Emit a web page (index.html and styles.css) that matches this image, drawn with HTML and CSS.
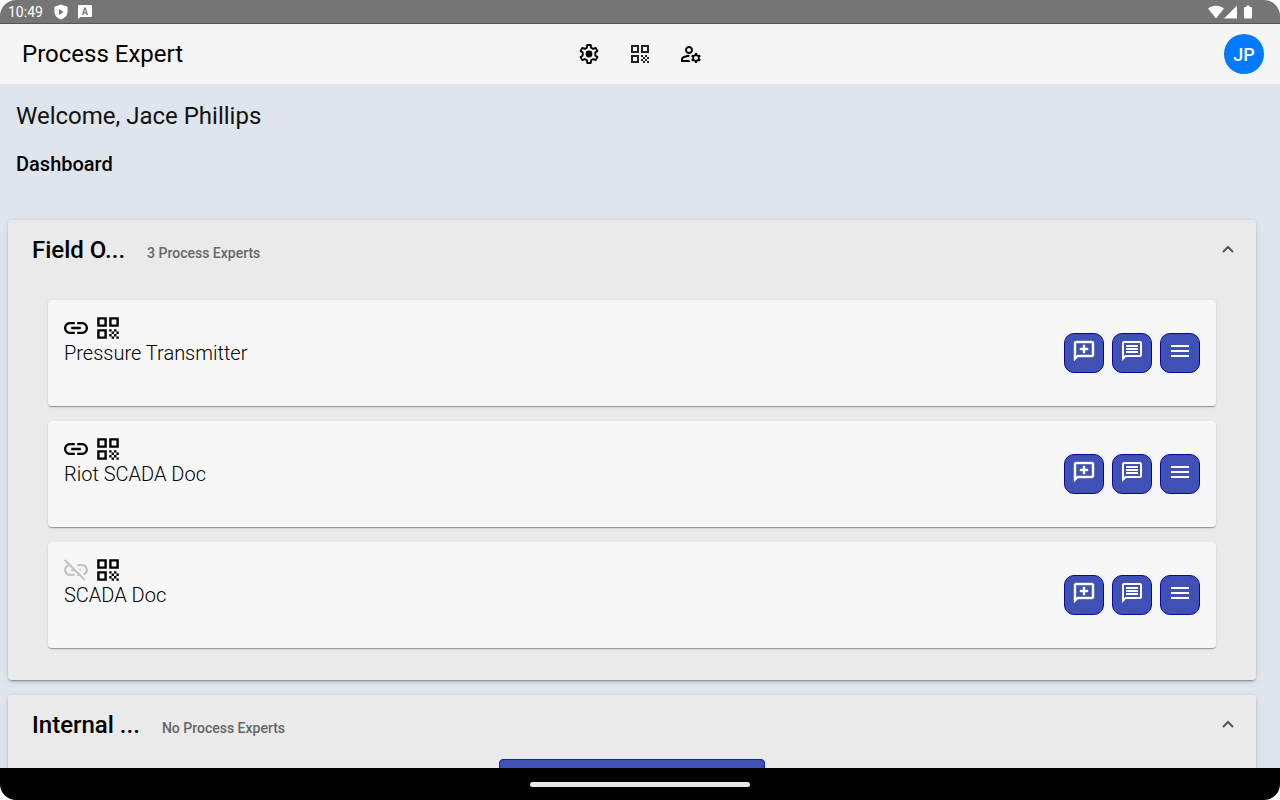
FILE: index.html
```
<!DOCTYPE html>
<html lang="en">

<head>
    <meta charset="UTF-8">
    <meta name="viewport" content="width=device-width, initial-scale=1.0">
    <link rel="stylesheet" href="styles.css">
    <title>Process Expert</title>
</head>

<body>
    <!-- shared icons -->
    <svg class="sprite" aria-hidden="true">
        <symbol id="qr" viewBox="2 2 20 20">
            <path d="M3 11h8V3H3v8zm2-6h4v4H5V5zM3 21h8v-8H3v8zm2-6h4v4H5v-4zM13 3v8h8V3h-8zm6 6h-4V5h4v4zM19 19h2v2h-2zM13 13h2v2h-2zM15 15h2v2h-2zM13 17h2v2h-2zM15 19h2v2h-2zM17 17h2v2h-2zM17 13h2v2h-2zM19 15h2v2h-2z" />
        </symbol>
        <symbol id="link" viewBox="2 2 20 20">
            <path d="M3.9 12c0-1.71 1.39-3.1 3.1-3.1h4V7H7c-2.76 0-5 2.24-5 5s2.24 5 5 5h4v-1.9H7c-1.71 0-3.1-1.39-3.1-3.1zM8 13h8v-2H8v2zm9-6h-4v1.9h4c1.71 0 3.1 1.39 3.1 3.1s-1.39 3.1-3.1 3.1h-4V17h4c2.76 0 5-2.24 5-5s-2.24-5-5-5z" />
        </symbol>
        <symbol id="link-off" viewBox="2 2 20 20">
            <path d="M17 7h-4v1.9h4c1.71 0 3.1 1.39 3.1 3.1 0 1.43-.98 2.63-2.31 2.98l1.46 1.46C20.88 15.61 22 13.95 22 12c0-2.76-2.24-5-5-5zm-1 4h-2.19l2 2H16zM2 4.27l3.11 3.11C3.29 8.12 2 9.91 2 12c0 2.76 2.24 5 5 5h4v-1.9H7c-1.71 0-3.1-1.39-3.1-3.1 0-1.59 1.21-2.9 2.76-3.07L8.73 11H8v2h2.73L13 15.27V17h1.73l4.01 4L20 19.74 3.27 3 2 4.27z" />
        </symbol>
        <symbol id="add-chat" viewBox="0 0 24 24">
            <path d="M20 2H4c-1.1 0-2 .9-2 2v18l4-4h14c1.1 0 2-.9 2-2V4c0-1.1-.9-2-2-2zm0 14H5.17L4 17.17V4h16v12zM11 14h2v-3h3V9h-3V6h-2v3H8v2h3z" stroke="currentColor" stroke-width=".4" />
        </symbol>
        <symbol id="chat" viewBox="0 0 24 24">
            <path d="M20 2H4c-1.1 0-2 .9-2 2v18l4-4h14c1.1 0 2-.9 2-2V4c0-1.1-.9-2-2-2zm0 14H5.17L4 17.17V4h16v12zM6 12h12v2H6zM6 9h12v2H6zM6 6h12v2H6z" />
        </symbol>
        <symbol id="menu" viewBox="0 0 24 24">
            <path d="M3 18h18v-2H3v2zm0-5h18v-2H3v2zm0-7v2h18V6H3z" />
        </symbol>
        <symbol id="up" viewBox="0 0 24 24">
            <path d="M7 15l5-5 5 5" fill="none" stroke="currentColor" stroke-width="2" />
        </symbol>
    </svg>

    <div class="device">
        <div class="status">
            <span class="time">10:49</span>
            <svg class="status-icon" viewBox="0 0 16 16">
                <path fill-rule="evenodd" d="M8 .5l6.5 2.3v5c0 3.6-2.5 6.3-6.5 7.7C4 14.1 1.5 11.4 1.5 7.8v-5zM6 5v6l4.5-3z" />
            </svg>
            <svg class="status-icon" viewBox="0 0 16 16">
                <path fill-rule="evenodd" d="M2 1h12a1 1 0 0 1 1 1v10a1 1 0 0 1-1 1H3.5L1 15V2a1 1 0 0 1 1-1zM7.3 3.5L5 11h1.4l.4-1.5h2.4l.4 1.5H11L8.7 3.5zM8 5.2l.8 3H7.2z" />
            </svg>
            <svg class="status-right" viewBox="0 0 48 16">
                <path d="M0 4.5C4.5.9 11.5.9 16 4.5L8 14.5zM29 1.5v13H16zM36.5 3h2V1.5h3V3h1.5q1 0 1 1v9.5q0 1-1 1h-6q-1 0-1-1V4q0-1 1-1z" />
            </svg>
        </div>

        <header class="toolbar">
            <h1 class="brand">Process Expert</h1>
            <nav class="tools">
                <button class="tool" aria-label="Settings">
                    <svg class="icon" viewBox="0 0 24 24">
                        <path d="M10.3 3h3.4l.4 2.7 2.1 1.2 2.5-1 1.7 3-2.1 1.7v2.8l2.1 1.7-1.7 3-2.5-1-2.1 1.2-.4 2.7h-3.4l-.4-2.7-2.1-1.2-2.5 1-1.7-3 2.1-1.7v-2.8L3.6 8.9l1.7-3 2.5 1 2.1-1.2z" fill="none" stroke="currentColor" stroke-width="1.9" stroke-linejoin="round" />
                        <circle cx="12" cy="12" r="3.4" />
                    </svg>
                </button>
                <button class="tool" aria-label="QR codes">
                    <svg class="icon small"><use href="#qr" /></svg>
                </button>
                <button class="tool" aria-label="Manage users">
                    <svg class="icon" viewBox="0 0 24 24">
                        <path d="M4 18v-.65c0-.34.16-.66.41-.81C6.1 15.53 8.03 15 10 15c.03 0 .05 0 .08.01.1-.7.3-1.37.59-1.98-.22-.02-.44-.03-.67-.03-2.42 0-4.68.67-6.61 1.82-.88.52-1.39 1.5-1.39 2.53V20h9.26c-.42-.6-.75-1.28-.97-2H4zM10 12c2.21 0 4-1.79 4-4s-1.79-4-4-4-4 1.79-4 4 1.79 4 4 4zm0-6c1.1 0 2 .9 2 2s-.9 2-2 2-2-.9-2-2 .9-2 2-2zM20.75 16c0-.22-.03-.42-.06-.63l1.14-1.01-1-1.73-1.45.49c-.32-.27-.68-.48-1.08-.63L18 11h-2l-.3 1.49c-.4.15-.76.36-1.08.63l-1.45-.49-1 1.73 1.14 1.01c-.03.21-.06.41-.06.63s.03.42.06.63l-1.14 1.01 1 1.73 1.45-.49c.32.27.68.48 1.08.63L16 21h2l.3-1.49c.4-.15.76-.36 1.08-.63l1.45.49 1-1.73-1.14-1.01c.03-.21.06-.41.06-.63zM17 18c-1.1 0-2-.9-2-2s.9-2 2-2 2 .9 2 2-.9 2-2 2z" />
                    </svg>
                </button>
            </nav>
            <button class="avatar">JP</button>
        </header>

        <main class="content">
            <p class="welcome">Welcome, Jace Phillips</p>
            <h2 class="page-title">Dashboard</h2>

            <section class="panel">
                <div class="panel-head">
                    <h3 class="panel-title">Field O...</h3>
                    <span class="panel-sub">3 Process Experts</span>
                    <button class="toggle" aria-label="Collapse"><svg class="icon"><use href="#up" /></svg></button>
                </div>
                <div class="panel-body">
                    <article class="card">
                        <div class="card-info">
                            <div class="card-icons">
                                <svg class="icon"><use href="#link" /></svg>
                                <svg class="icon"><use href="#qr" /></svg>
                            </div>
                            <h4 class="card-name">Pressure Transmitter</h4>
                        </div>
                        <div class="actions">
                            <button class="action" aria-label="New chat"><svg class="icon"><use href="#add-chat" /></svg></button>
                            <button class="action" aria-label="Chats"><svg class="icon"><use href="#chat" /></svg></button>
                            <button class="action" aria-label="Menu"><svg class="icon"><use href="#menu" /></svg></button>
                        </div>
                    </article>
                    <article class="card">
                        <div class="card-info">
                            <div class="card-icons">
                                <svg class="icon"><use href="#link" /></svg>
                                <svg class="icon"><use href="#qr" /></svg>
                            </div>
                            <h4 class="card-name">Riot SCADA Doc</h4>
                        </div>
                        <div class="actions">
                            <button class="action" aria-label="New chat"><svg class="icon"><use href="#add-chat" /></svg></button>
                            <button class="action" aria-label="Chats"><svg class="icon"><use href="#chat" /></svg></button>
                            <button class="action" aria-label="Menu"><svg class="icon"><use href="#menu" /></svg></button>
                        </div>
                    </article>
                    <article class="card">
                        <div class="card-info">
                            <div class="card-icons">
                                <svg class="icon off"><use href="#link-off" /></svg>
                                <svg class="icon"><use href="#qr" /></svg>
                            </div>
                            <h4 class="card-name">SCADA Doc</h4>
                        </div>
                        <div class="actions">
                            <button class="action" aria-label="New chat"><svg class="icon"><use href="#add-chat" /></svg></button>
                            <button class="action" aria-label="Chats"><svg class="icon"><use href="#chat" /></svg></button>
                            <button class="action" aria-label="Menu"><svg class="icon"><use href="#menu" /></svg></button>
                        </div>
                    </article>
                </div>
            </section>

            <section class="panel">
                <div class="panel-head">
                    <h3 class="panel-title">Internal ...</h3>
                    <span class="panel-sub">No Process Experts</span>
                    <button class="toggle" aria-label="Collapse"><svg class="icon"><use href="#up" /></svg></button>
                </div>
                <button class="create" aria-label="Create"></button>
            </section>
        </main>

        <div class="home-bar">
            <div class="home-pill"></div>
        </div>
    </div>
</body>

</html>
```
FILE: styles.css
```
* {
    margin: 0;
    padding: 0;
    box-sizing: border-box;
}

body {
    background-color: #fff;
    font-family: Roboto, "Liberation Sans", sans-serif;
    color: #000;
}

button {
    border: none;
    background: none;
    font-family: inherit;
    color: inherit;
    cursor: pointer;
}

.sprite {
    display: none;
}

.icon {
    display: block;
    width: 24px;
    height: 24px;
    fill: currentColor;
}

.icon.small {
    width: 20px;
    height: 20px;
    color: #222;
}

.icon.off {
    color: #c4c4c4;
}

.device {
    display: flex;
    flex-direction: column;
    height: 100vh;
    border-radius: 16px;
    overflow: hidden;
}

.status {
    display: flex;
    flex: none;
    align-items: center;
    gap: 8px;
    height: 24px;
    padding: 0 24px 0 8px;
    border-bottom: 1px solid #555;
    background-color: #757575;
    color: #fff;
}

.time {
    margin-right: 2px;
    font-size: 14px;
}

.status-icon {
    width: 16px;
    height: 16px;
    fill: #fff;
}

.status-right {
    width: 48px;
    height: 16px;
    margin-left: auto;
    fill: #fff;
}

.toolbar {
    display: grid;
    grid-template-columns: 1fr auto 1fr;
    flex: none;
    align-items: center;
    height: 60px;
    padding: 0 16px;
    background-color: #f5f5f5;
}

.brand {
    padding-left: 6px;
    font-size: 24px;
    font-weight: 400;
}

.tools {
    display: flex;
    gap: 11px;
}

.tool {
    display: flex;
    align-items: center;
    justify-content: center;
    width: 40px;
    height: 40px;
}

.avatar {
    justify-self: end;
    width: 40px;
    height: 40px;
    border-radius: 50%;
    background-color: #007bff;
    color: #fff;
    font-size: 18px;
    font-weight: 500;
}

.content {
    flex: 1;
    min-height: 0;
    padding: 16px 24px 0 8px;
    background-color: #dfe5ed;
    overflow: hidden;
}

.welcome {
    padding-left: 8px;
    color: #111;
    font-size: 24px;
    font-weight: 400;
    line-height: 32px;
}

.page-title {
    margin: 16px 0 40px;
    padding-left: 8px;
    font-size: 20px;
    font-weight: 500;
    line-height: 32px;
}

.panel {
    margin-bottom: 15px;
    border-radius: 4px;
    background-color: #eaeaea;
    box-shadow: 0 3px 1px -2px rgba(0, 0, 0, .2), 0 2px 2px 0 rgba(0, 0, 0, .14), 0 1px 5px 0 rgba(0, 0, 0, .12);
}

.panel-head {
    display: flex;
    align-items: baseline;
    height: 64px;
    padding: 14px 16px 0 24px;
}

.panel-title {
    margin-right: 22px;
    font-size: 24px;
    font-weight: 500;
    line-height: 32px;
}

.panel-sub {
    color: #666;
    font-size: 14px;
    font-weight: 500;
}

.toggle {
    align-self: flex-start;
    margin: 3px 0 0 auto;
    color: #555;
}

.panel-body {
    display: flex;
    flex-direction: column;
    gap: 15px;
    padding: 16px 40px 32px;
}

.card {
    display: flex;
    align-items: center;
    justify-content: space-between;
    padding: 16px;
    border-radius: 4px;
    background-color: #f7f7f7;
    box-shadow: 0 2px 1px -1px rgba(0, 0, 0, .2), 0 1px 1px 0 rgba(0, 0, 0, .14), 0 1px 3px 0 rgba(0, 0, 0, .12);
}

.card-info {
    min-height: 74px;
}

.card-icons {
    display: flex;
    gap: 8px;
}

.card-name {
    font-size: 20px;
    font-weight: 300;
    line-height: 26px;
}

.actions {
    display: flex;
    gap: 8px;
}

.action {
    display: flex;
    align-items: center;
    justify-content: center;
    width: 40px;
    height: 40px;
    padding-bottom: 4px;
    border: 1px solid #0808a0;
    border-radius: 10px;
    background-color: #3f51b5;
    color: #fff;
}

.create {
    display: block;
    width: 266px;
    height: 40px;
    margin: 0 auto;
    border: 1px solid #0828a0;
    border-radius: 4px;
    background-color: #3f51b5;
}

.home-bar {
    display: flex;
    flex: none;
    align-items: center;
    justify-content: center;
    height: 32px;
    background-color: #000;
}

.home-pill {
    width: 220px;
    height: 5px;
    border-radius: 3px;
    background-color: #e8e8e8;
}
```
